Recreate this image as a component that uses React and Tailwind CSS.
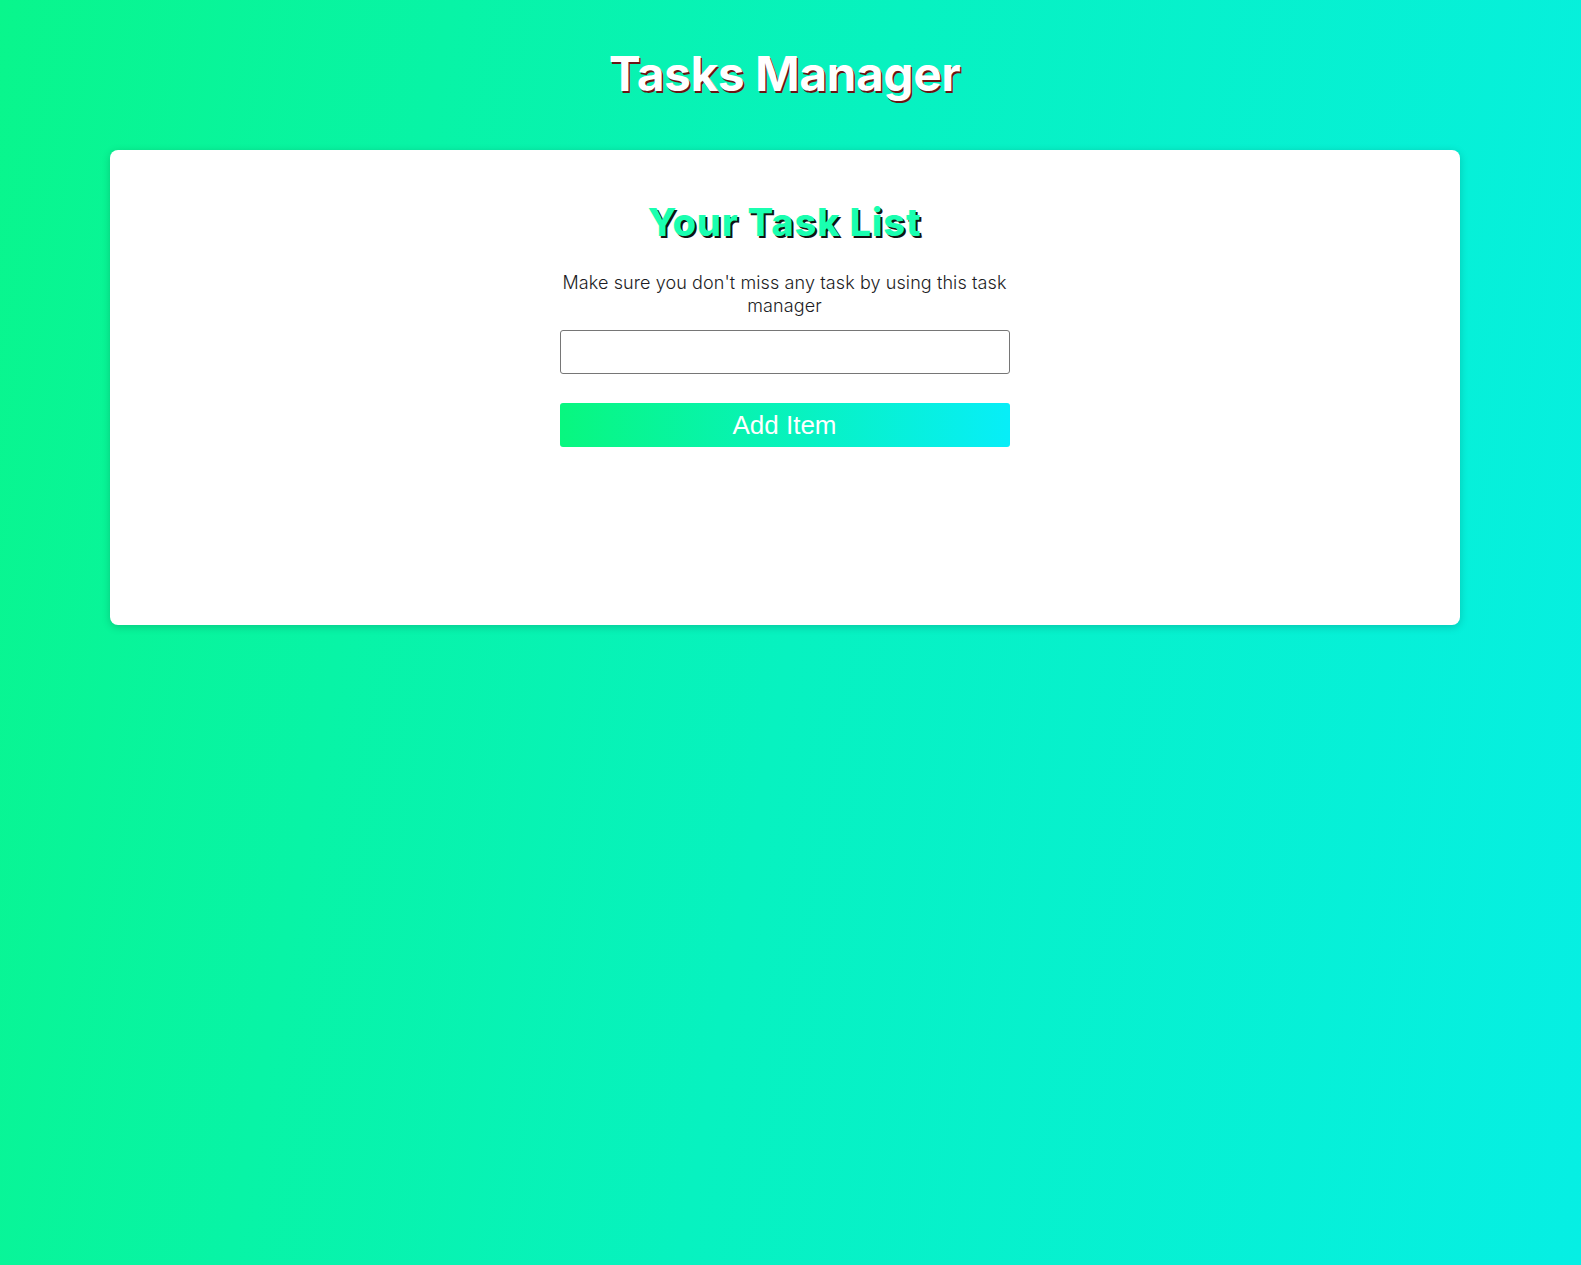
import { useState } from "react";

export default function App() {
  const [task, setTask] = useState("");

  return (
    <div className="min-h-[1265px] bg-[linear-gradient(100deg,#09f68c_0%,#07f2c0_50%,#06efe4_100%)] pr-3 font-['Inter',sans-serif]">
      {/* Page title */}
      <h1 className="pt-[44px] text-center text-[48px] font-bold leading-[60px] tracking-[-0.5px] text-white [text-shadow:1.5px_1.5px_0_#6b1414]">
        Tasks Manager
      </h1>

      {/* Card */}
      <div className="mx-auto mt-[46px] h-[475px] w-[1350px] rounded-lg bg-white pt-[50px] shadow-[0_2px_8px_rgba(0,0,0,0.18)]">
        <div className="mx-auto flex w-[452px] flex-col items-center">
          <h2 className="text-center text-[38px] font-extrabold leading-[44px] tracking-[0.8px] text-[#1affb0] [text-shadow:2px_2px_0_#111]">
            Your Task List
          </h2>
          <p className="mt-[27px] text-center text-[18px] font-light leading-[23px] tracking-[0.1px] text-[#1c1c24]">
            Make sure you don't miss any task by using this task manager
          </p>
          <input
            value={task}
            onChange={e => setTask(e.target.value)}
            className="mt-[13px] h-[44px] w-[450px] rounded-[3px] border border-[#767676] px-3 text-base outline-none"
          />
          <button className="mt-[29px] h-[44px] w-[450px] rounded-[3px] bg-[linear-gradient(to_right,#08f77f,#07eef8)] font-['Liberation_Sans',sans-serif] text-[26px] leading-none text-white">
            Add Item
          </button>
        </div>
      </div>
    </div>
  );
}
